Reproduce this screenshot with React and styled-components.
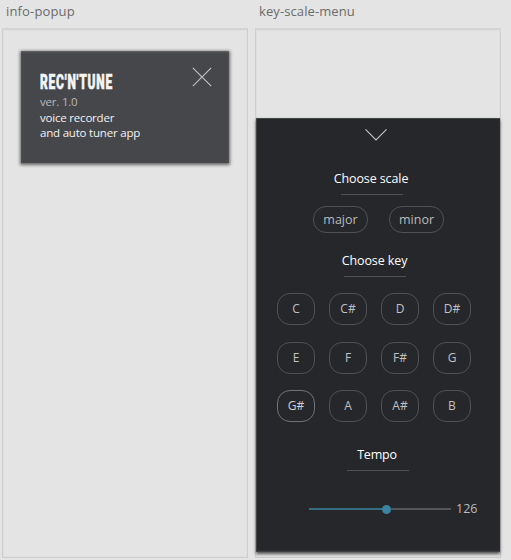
import React from "react";
import styled, { createGlobalStyle } from "styled-components";

const GlobalStyle = createGlobalStyle`
  * { box-sizing: border-box; }
  html, body { margin: 0; background: #e4e4e4; }
  body { font-family: "Open Sans", "Noto Sans", sans-serif; overflow: hidden; }
  button { font: inherit; background: none; padding: 0; margin: 0; }
`;

const Canvas = styled.main`
  display: grid;
  grid-template-columns: 246px 246px;
  column-gap: 7px;
  height: 560px;
  padding-left: 2px;
`;

const Column = styled.section`
  display: flex;
  flex-direction: column;
`;

const Line = styled.span`
  display: inline-block;
  white-space: pre;
  letter-spacing: ${(p) => p.$track || 0}px;
`;

const BoardName = styled.header`
  height: 28px;
  padding-left: 4px;
  font-size: 13px;
  line-height: 23px;
  color: #6b6b6b;
`;

const Board = styled.div`
  height: 530px;
  border: 1px solid #cecece;
  border-top: 2px solid #d4d4d4;
  box-shadow: inset 0 0 0 1px #dfdfdf;
`;

const Popup = styled.article`
  display: flex;
  justify-content: space-between;
  width: 208px;
  height: 112px;
  margin: 21px 0 0 18px;
  padding: 21px 17px 0 19px;
  background: #46474a;
  box-shadow: 0 1px 3px 1px rgba(0, 0, 0, 0.55), inset 0 1px 2px rgba(140, 140, 140, 0.5);
`;

const Brand = styled.h1`
  margin: 0 0 2px;
  width: 120px;
  height: 20px;
  font-family: Roboto, sans-serif;
  font-weight: 900;
  font-size: 20px;
  line-height: 20px;
  letter-spacing: 1.3px;
  color: #f5f5f5;
  -webkit-text-stroke: 0.6px #f5f5f5;
  white-space: nowrap;
  transform: scaleX(0.6);
  transform-origin: left;
`;

const InfoLine = styled.p`
  margin: 0;
  height: 15.6px;
  font-size: 11.5px;
  line-height: 15.6px;
  white-space: nowrap;
  color: ${(p) => (p.$dim ? "#b7b7b9" : "#f2f2f4")};
`;

const CloseButton = styled.button`
  width: 20px;
  height: 20px;
  margin-top: -5px;
  border: 0;
  svg { display: block; }
`;

const Panel = styled.div`
  display: flex;
  flex-direction: column;
  height: 434px;
  margin-top: 88px;
  background: #26272b;
  box-shadow: 0 2px 3px rgba(0, 0, 0, 0.65), inset 0 -2px 2px -1px #4a4b4d, inset 1px 0 0 #414743, inset 0 1px 0 #414743;
`;

const Handle = styled.button`
  display: flex;
  align-items: flex-start;
  height: 48px;
  padding: 10px 0 0 109px;
  border: 0;
  svg { display: block; }
`;

const Heading = styled.h2`
  display: flex;
  flex-direction: column;
  align-items: center;
  width: 100px;
  height: 29px;
  margin: ${(p) => p.$top}px 0 0 ${(p) => p.$left}px;
  font-size: 12.5px;
  font-weight: 400;
  line-height: 25px;
  color: #ffffff;
`;

const Rule = styled.i`
  display: block;
  width: 62px;
  height: 1px;
  margin-top: 3px;
  margin-left: ${(p) => p.$shift || 0}px;
  background: #505154;
  flex: none;
`;

const Scales = styled.div`
  display: flex;
  gap: 21px;
  margin: 11px 0 0 57px;
`;

const Scale = styled.button`
  width: 55px;
  height: 27px;
  border: 1px solid #515256;
  border-radius: 13px;
  font-size: 12.5px;
  line-height: 24px;
  color: #babbbd;
`;

const Keys = styled.div`
  display: grid;
  grid-template-columns: repeat(4, 38px);
  grid-auto-rows: 32px;
  gap: 16.6px 14px;
  margin: 16px 0 0 21px;
`;

const Key = styled.button`
  border: 1px solid ${(p) => (p.$active ? "#717275" : "#505155")};
  border-radius: 13px;
  font-size: 12px;
  line-height: 28px;
  color: ${(p) => (p.$active ? "#cfd0d1" : "#c0c1c3")};
`;

const Tempo = styled.div`
  display: flex;
  align-items: center;
  height: 20px;
  margin: 28px 0 0 53px;
  font-size: 12.5px;
  line-height: 20px;
  color: #babbbd;
`;

const Track = styled.div`
  display: flex;
  align-items: center;
  width: 142px;
  height: 9px;
  margin-right: 5px;
`;

const Bar = styled.i`
  height: 2px;
  width: ${(p) => (p.$filled ? "73px" : "60px")};
  background: ${(p) => (p.$filled ? "#356d83" : "#555659")};
`;

const Thumb = styled.i`
  width: 9px;
  height: 9px;
  border-radius: 50%;
  background: #3b83a2;
`;

const keys = ["C", "C#", "D", "D#", "E", "F", "F#", "G", "G#", "A", "A#", "B"];

export default function App() {
  return (
    <>
      <GlobalStyle />
      <Canvas>
        <Column>
          <BoardName><Line $track={0.15}>info-popup</Line></BoardName>
          <Board>
            <Popup>
              <div>
                <Brand>REC'N'TUNE</Brand>
                <InfoLine $dim><Line $track={-0.2}>ver. 1.0</Line></InfoLine>
                <InfoLine><Line $track={-0.2}>voice recorder</Line></InfoLine>
                <InfoLine><Line $track={-0.2}>and auto tuner app</Line></InfoLine>
              </div>
              <CloseButton aria-label="Close">
                <svg width="20" height="20" viewBox="0 0 20 20" stroke="#c4c4c6" strokeWidth="1.1">
                  <path d="M.8.8 19.2 19.2M19.2.8.8 19.2" />
                </svg>
              </CloseButton>
            </Popup>
          </Board>
        </Column>
        <Column>
          <BoardName><Line $track={0.1}>key-scale-menu</Line></BoardName>
          <Board>
            <Panel>
              <Handle aria-label="Collapse">
                <svg width="22" height="13" viewBox="0 0 22 13" fill="none" stroke="#c0c0c2" strokeWidth="1.2">
                  <path d="M.5 1.3 11 11.8 21.5 1.3" />
                </svg>
              </Handle>
              <Heading $left={65} $top={0}><Line $track={-0.1}>Choose scale</Line><Rule $shift={2} /></Heading>
              <Scales>
                <Scale>major</Scale>
                <Scale>minor</Scale>
              </Scales>
              <Heading $left={68.5} $top={15}><Line $track={-0.1}>Choose key</Line><Rule /></Heading>
              <Keys>
                {keys.map((k) => <Key key={k} $active={k === "G#"}>{k}</Key>)}
              </Keys>
              <Heading $left={71} $top={20}><Line $track={-0.2}>Tempo</Line><Rule $shift={2} /></Heading>
              <Tempo>
                <Track><Bar $filled /><Thumb /><Bar /></Track>
                <Line>126</Line>
              </Tempo>
            </Panel>
          </Board>
        </Column>
      </Canvas>
    </>
  );
}
